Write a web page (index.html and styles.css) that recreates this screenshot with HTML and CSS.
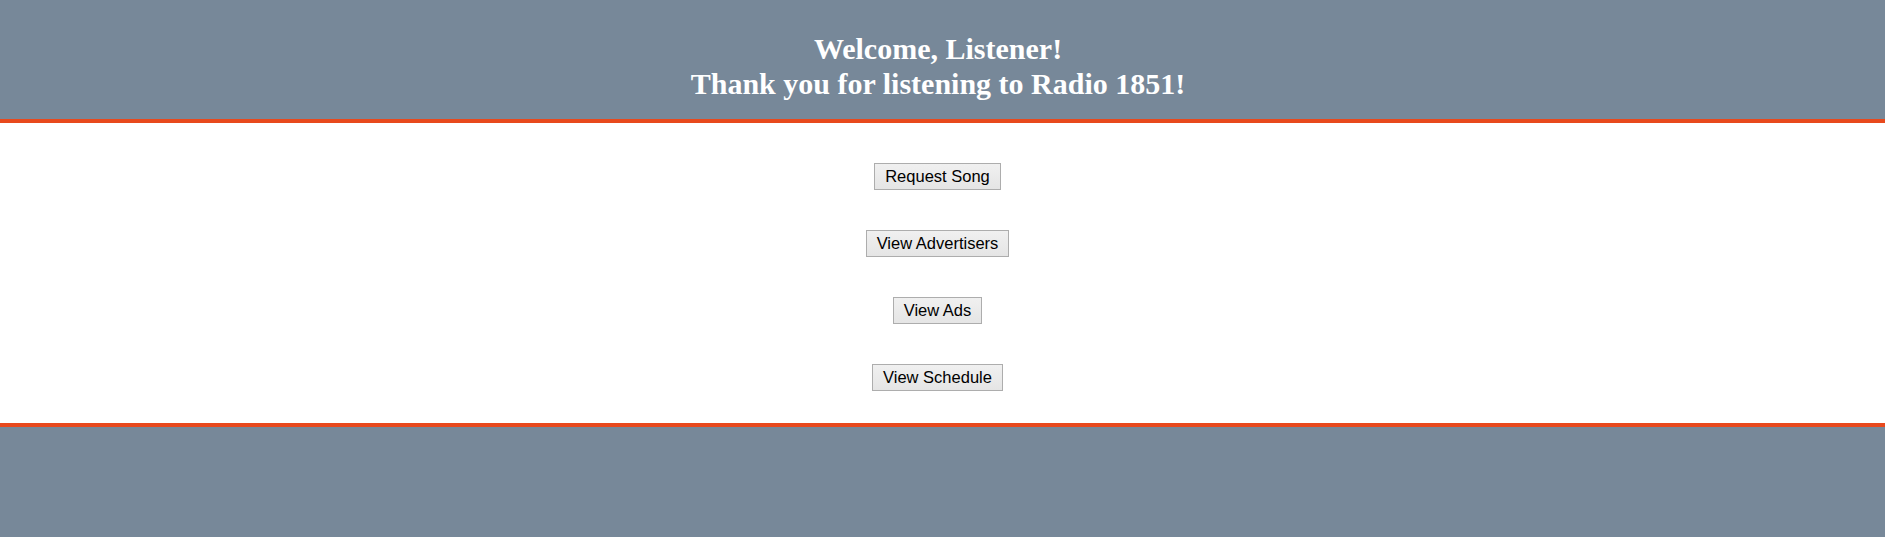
FILE: index.html
```html
<!DOCTYPE html>
<html lang="en">
<head>
<meta charset="utf-8">
<title>Radio 1851</title>
<link rel="stylesheet" href="styles.css">
</head>
<body>
<header class="site-header">
  <h2 class="welcome">Welcome, Listener!<br>Thank you for listening to Radio 1851!</h2>
</header>
<main class="menu">
  <button class="menu-btn" type="button">Request Song</button>
  <button class="menu-btn" type="button">View Advertisers</button>
  <button class="menu-btn" type="button">View Ads</button>
  <button class="menu-btn" type="button">View Schedule</button>
</main>
<footer class="site-footer"></footer>
</body>
</html>
```
FILE: styles.css
```css
html, body {
  margin: 0;
  padding: 0;
}
body {
  background: #778899;
  min-height: 537px;
}
.site-header {
  background: #778899;
  border-bottom: 4px solid #e8491d;
  padding: 31px 9px 18px 0;
  height: 70px;
}
.welcome {
  margin: 0;
  color: #ffffff;
  font-family: "Liberation Serif", "Times New Roman", serif;
  font-weight: bold;
  font-size: 30px;
  line-height: 35px;
  text-align: center;
}
.menu {
  background: #ffffff;
  display: flex;
  flex-direction: column;
  align-items: center;
  gap: 40px;
  padding: 40px 10px 32px 0;
}
.menu-btn {
  font-family: "Liberation Sans", Arial, sans-serif;
  font-size: 16.5px;
  line-height: 19px;
  color: #000000;
  padding: 3px 10px;
  border: 1px solid #adadad;
  border-radius: 0;
  background: linear-gradient(#f0f0f0, #e5e5e5);
  margin: 0;
}
.site-footer {
  border-top: 4px solid #e8491d;
  background: #778899;
  height: 110px;
}
```
